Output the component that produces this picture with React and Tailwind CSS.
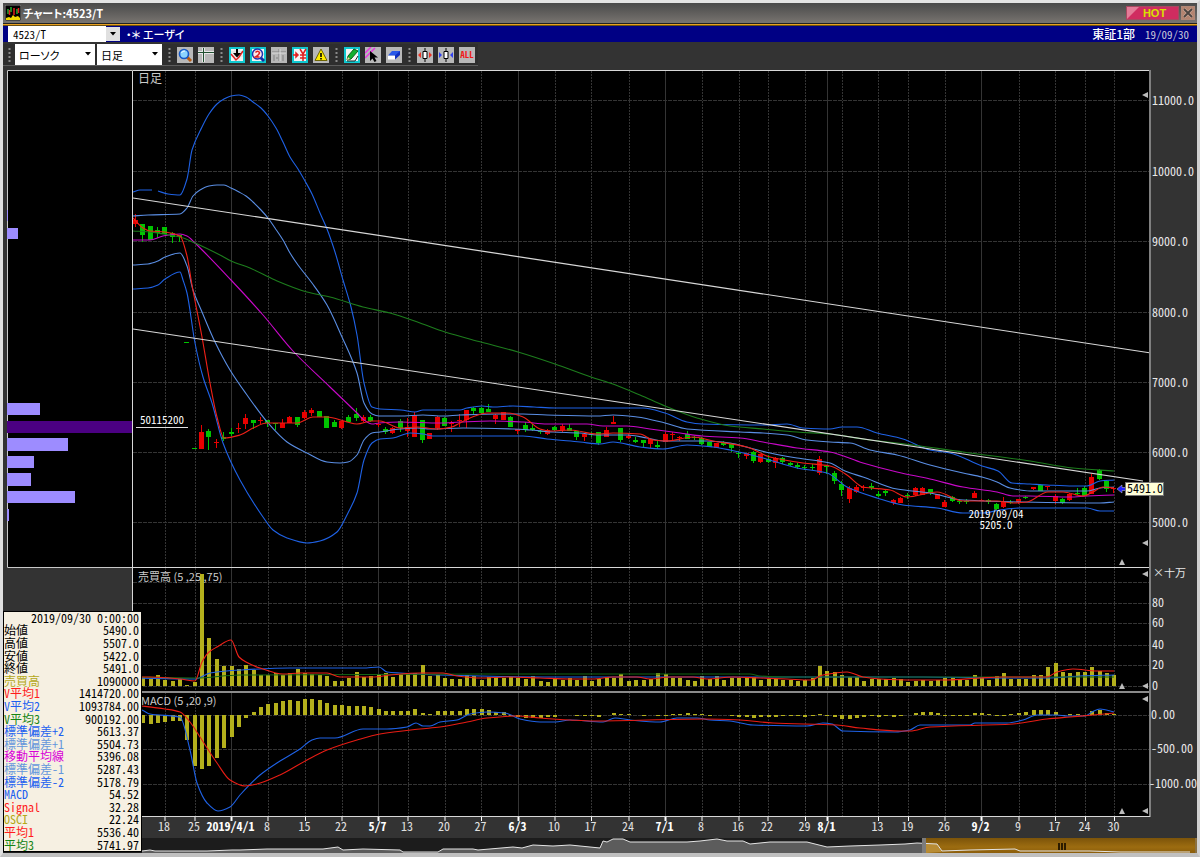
// src/App.jsx
import React, { useId } from "react";

// x of 2019/4/1 and the width of one trading day
const X0 = 231.5;
const STEP = 7.358;
const dayX = (i) => X0 + STEP * i;

const FIRST_DAY = -13;

// [color, body top, body bottom, high, low]
const CANDLES = [
  ["r", 220, 224, 214, 227], ["g", 224, 235, 224, 242], ["g", 226, 240, 226, 240], ["g", 230, 233, 227, 238],
  ["g", 227, 234, 227, 234], ["g", 233, 237, 232, 243], ["g", 235, 237, 235, 242], ["g", 342, 343, 342, 343],
  ["g", 448, 449, 448, 449], ["r", 432, 449, 425, 449], ["g", 431, 437, 429, 450], ["r", 442, 443, 439, 448],
  ["g", 437, 439, 432, 441], ["g", 432, 434, 428, 436], ["r", 428, 429, 423, 433], ["r", 418, 424, 414, 429],
  ["g", 420, 423, 420, 429], ["r", 420, 421, 417, 424], ["g", 420, 423, 420, 427], ["g", 423, 424, 423, 430],
  ["r", 423, 428, 419, 428], ["r", 417, 423, 416, 423], ["g", 417, 425, 417, 427], ["r", 412, 418, 410, 419],
  ["r", 410, 413, 408, 416], ["g", 411, 417, 411, 417], ["g", 416, 428, 416, 428], ["g", 422, 427, 420, 427],
  ["r", 421, 428, 421, 429], ["g", 417, 422, 415, 422], ["g", 414, 418, 408, 421], ["r", 417, 421, 415, 422],
  ["g", 417, 421, 415, 422], ["r", 424, 425, 420, 427], ["g", 429, 432, 427, 434], ["r", 428, 433, 427, 434],
  ["g", 421, 428, 419, 432], ["r", 427, 431, 418, 437], ["r", 415, 437, 412, 437], ["g", 420, 440, 420, 443],
  ["r", 433, 439, 433, 439], ["r", 417, 428, 416, 430], ["g", 418, 426, 417, 426], ["r", 423, 424, 421, 432],
  ["r", 420, 421, 414, 427], ["r", 410, 420, 410, 428], ["g", 408, 411, 407, 415], ["g", 408, 413, 407, 414],
  ["g", 409, 412, 404, 412], ["r", 415, 419, 414, 424], ["r", 412, 420, 412, 420], ["g", 417, 427, 416, 427],
  ["r", 429, 431, 429, 434], ["g", 425, 430, 422, 432], ["g", 428, 430, 424, 431], ["g", 431, 432, 430, 434],
  ["r", 430, 434, 429, 435], ["g", 427, 430, 426, 431], ["r", 426, 430, 424, 432], ["g", 428, 431, 424, 431],
  ["g", 431, 437, 431, 440], ["r", 434, 437, 433, 441], ["g", 434, 435, 432, 437], ["g", 432, 443, 432, 445],
  ["r", 430, 437, 427, 437], ["r", 422, 424, 416, 424], ["g", 428, 440, 428, 442], ["r", 436, 438, 434, 439],
  ["g", 440, 442, 437, 443], ["g", 440, 443, 440, 447], ["r", 439, 444, 439, 448], ["g", 445, 447, 441, 449],
  ["r", 434, 442, 432, 442], ["r", 434, 435, 432, 440], ["r", 437, 438, 436, 441], ["g", 434, 439, 431, 439],
  ["g", 437, 438, 436, 440], ["g", 438, 444, 437, 445], ["g", 442, 447, 442, 447], ["r", 443, 448, 443, 448],
  ["g", 442, 445, 441, 446], ["g", 444, 448, 443, 452], ["g", 453, 454, 451, 458], ["r", 453, 456, 453, 459],
  ["g", 452, 461, 451, 463], ["r", 454, 462, 454, 463], ["g", 459, 462, 455, 463], ["r", 458, 463, 457, 468],
  ["g", 458, 462, 457, 464], ["g", 463, 465, 462, 466], ["g", 465, 467, 463, 469], ["g", 467, 468, 465, 470],
  ["g", 467, 468, 464, 470], ["r", 459, 473, 456, 475], ["g", 466, 467, 466, 474], ["g", 473, 481, 471, 484],
  ["g", 484, 490, 481, 496], ["r", 488, 499, 486, 503], ["r", 487, 492, 485, 493], ["r", 487, 488, 485, 491],
  ["g", 486, 488, 483, 490], ["g", 494, 496, 491, 497], ["g", 491, 493, 489, 496], ["r", 500, 503, 499, 505],
  ["r", 498, 503, 497, 503], ["g", 495, 496, 493, 499], ["r", 488, 495, 487, 496], ["r", 488, 495, 487, 495],
  ["g", 489, 493, 489, 495], ["r", 494, 499, 494, 499], ["r", 502, 507, 500, 507], ["g", 497, 501, 496, 502],
  ["g", 501, 502, 499, 504], ["g", 501, 502, 499, 504], ["r", 493, 498, 491, 498], ["r", 500, 501, 499, 501],
  ["g", 500, 502, 499, 504], ["g", 504, 509, 503, 510], ["r", 502, 507, 497, 508], ["g", 502, 503, 500, 504],
  ["r", 499, 502, 499, 504], ["g", 497, 498, 496, 499], ["r", 487, 489, 487, 490], ["g", 485, 491, 484, 491],
  ["r", 486, 487, 486, 490], ["r", 496, 501, 494, 504], ["g", 499, 503, 498, 504], ["r", 494, 500, 493, 501],
  ["g", 493, 494, 488, 495], ["g", 488, 496, 486, 496], ["r", 477, 494, 474, 494], ["g", 470, 479, 469, 480],
  ["g", 481, 489, 480, 492], ["r", 488, 489, 487, 493],
];

// bar heights, one per day, starting the day after FIRST_DAY
const VOLUME = [
  9, 7, 11, 6, 5, 7, 1, 4, 112, 48, 27, 20, 20, 17, 21, 16, 11, 11, 13, 11, 13, 17, 13, 12, 11, 10, 5, 5, 8, 14, 9, 10,
  12, 13, 9, 12, 12, 13, 21, 10, 11, 8, 7, 7, 11, 10, 6, 9, 9, 8, 9, 8, 7, 10, 5, 4, 8, 6, 8, 6, 10, 5, 7, 9, 8, 12, 5,
  6, 6, 7, 13, 12, 8, 8, 6, 5, 10, 7, 10, 6, 8, 8, 8, 9, 6, 7, 7, 6, 6, 5, 6, 8, 20, 15, 14, 11, 9, 9, 5, 7, 7, 7, 8, 7,
  4, 5, 6, 5, 6, 8, 8, 7, 6, 11, 8, 6, 10, 13, 7, 7, 7, 11, 11, 19, 23, 14, 13, 14, 14, 19, 15, 13, 11,
];

const OSCI = [
  -8, -9, -8, -7, -6, -6, -25, -51, -54, -51, -43, -33, -22, -12, -3, 3, 8, 11, 12, 14, 15, 14, 16, 16, 15, 12, 10, 10,
  9, 9, 9, 8, 6, 4, 4, 4, 4, 6, 2, 1, 4, 4, 4, 4, 6, 6, 6, 5, 3, 3, -1, -2, -3, -3, -3, -2, -2, 0, 0, -1, -1, -1, -2, 0,
  2, 1, 1, 0, -1, 0, -1, -1, 1, 1, 2, 1, 1, -1, 0, 0, -1, -2, -2, -3, -2, -2, -2, -1, -1, -1, -2, -1, 1, -1, -2, -4, -4,
  -3, -2, -1, -2, -1, -2, -1, 0, 2, 3, 3, 2, -1, -1, -1, -1, 2, 2, 1, -1, -1, 1, 2, 3, 5, 5, 5, 3, -1, 1, 1, -1, 4, 5, 2,
  1,
];

const PRICE_LINES = [
  { color: "#1f62e6", points: "133,192 140,190 152,190" },
  {
    color: "#1f62e6",
    points:
      "158,191 168,194 180,195 187,179 192,150 202,127 209,114 217,104 224,99 231,96 239,95 246,97 253,102 261,108 268,116 276,128 283,142 290,157 298,169 305,181 312,194 320,213 327,229 335,252 343,280 351,307 357,335 364,383 372,407 380,409 401,410 415,412 423,410 460,410 467,408 482,406 493,407 513,406 534,407 555,408 643,408 665,413 687,422 702,424 763,425 787,424 803,428 830,429 842,427 857,427 877,433 903,439 930,450 950,453 982,466 998,471 1012,483 1030,484 1047,485 1073,486 1087,486 1100,481 1114,480",
  },
  {
    color: "#5a8ee4",
    points:
      "133,216 148,215 180,214 187,208 193,196 200,190 209,186 217,185 224,185 231,188 239,192 246,196 253,202 261,210 268,218 275,228 283,240 290,253 298,265 312,283 327,305 342,337 357,373 364,403 372,414 379,416 400,416 423,415 443,416 460,415 500,414 523,414 547,415 597,416 613,415 637,417 665,423 687,429 740,432 763,433 787,435 807,440 830,442 850,443 870,450 897,455 930,465 963,473 982,477 997,482 1010,488 1030,491 1087,491 1100,488 1114,487",
  },
  {
    color: "#c808c8",
    points:
      "133,240 150,240 163,236 180,234 187,236 195,243 231,280 263,315 293,351 330,387 357,413 364,420 372,424 379,423 400,422 440,423 460,422 490,421 523,422 547,424 587,424 603,426 627,426 650,429 680,433 702,436 740,438 763,442 797,448 830,452 863,463 897,472 930,479 963,487 997,492 1013,496 1030,496 1070,497 1087,496 1114,495",
  },
  {
    color: "#5a8ee4",
    points:
      "133,265 148,264 158,261 165,257 180,253 187,266 193,290 202,312 215,342 230,370 247,395 268,423 287,442 307,453 327,462 340,463 348,462 357,455 364,440 372,433 380,432 400,429 417,428 430,429 463,428 513,429 530,430 553,432 580,433 597,435 627,435 647,438 663,441 707,441 730,443 750,448 770,453 797,458 830,463 845,471 863,477 897,489 930,493 963,500 1020,502 1100,503 1114,502",
  },
  {
    color: "#1f62e6",
    points:
      "133,289 148,288 158,285 165,279 180,272 183,280 187,293 195,343 203,377 212,403 223,443 240,480 263,517 273,530 287,538 307,543 320,541 337,532 348,513 357,493 364,460 372,443 380,439 393,438 410,433 423,434 433,436 523,436 547,439 580,442 600,444 613,442 640,447 663,449 687,445 713,447 730,450 763,458 797,468 827,473 847,487 877,498 903,505 937,508 963,513 983,513 1000,510 1020,508 1087,508 1100,511 1114,511",
  },
  {
    color: "#1d7d1d",
    points:
      "133,231 150,232 163,234 180,237 195,243 220,255 231,261 250,268 275,280 307,292 330,297 363,307 390,313 420,323 445,332 481,342 518,352 555,364 591,377 610,383 640,395 665,406 697,418 730,426 763,429 797,432 830,434 863,439 913,445 963,452 1030,461 1073,468 1114,471",
  },
  {
    color: "#f02018",
    points:
      "133,218 143,228 150,231 165,232 180,236 187,256 192,285 202,337 210,383 217,417 224,438 240,435 253,428 267,423 297,423 313,417 327,417 347,422 357,424 372,421 380,421 400,428 417,427 437,429 452,427 460,423 475,416 487,413 507,413 523,417 540,429 550,431 570,430 597,434 613,433 640,434 653,440 667,441 693,437 713,441 747,447 770,457 803,463 830,466 847,475 863,487 890,490 907,497 937,492 963,501 997,501 1013,503 1027,502 1048,492 1063,492 1083,496 1093,492 1103,487 1114,488",
  },
  // trend lines
  { color: "#d8d8d8", points: "133,198 1151,353" },
  { color: "#d8d8d8", points: "133,329 1143,481" },
];

const VOLUME_LINES = [
  {
    color: "#1f62e6",
    points:
      "133,678 195,679 210,673 240,670 290,668 363,668 379,667 387,672 400,673 440,675 480,676 570,677 700,677 850,677 923,677 1013,678 1047,678 1080,676 1114,675",
  },
  { color: "#146414", points: "133,677 195,678 240,675 480,674 750,674 760,676 793,677 900,677 1114,677" },
  {
    color: "#f02018",
    points:
      "133,677 150,677 180,679 195,681 202,662 209,652 217,647 231,640 239,657 246,662 260,668 283,674 300,673 327,673 340,677 373,677 390,675 420,673 443,673 457,676 480,678 507,677 540,678 570,679 593,679 613,677 637,677 650,679 670,677 693,677 707,679 733,677 760,678 787,679 810,680 823,675 847,672 863,677 880,679 913,680 947,680 980,678 1003,677 1047,677 1057,672 1073,669 1097,671 1114,671",
  },
];

const MACD_LINES = [
  {
    color: "#1f62e6",
    points:
      "133,708 142,710 150,714 180,717 190,750 197,783 207,803 218,811 230,807 240,795 260,775 280,761 300,749 312,740 320,738 335,738 363,729 387,729 407,727 416,723 423,726 430,726 440,722 457,720 470,714 487,712 505,713 520,719 540,722 555,722 570,720 603,722 615,718 630,720 660,722 677,718 697,718 710,720 730,721 753,725 807,726 823,723 832,724 843,731 895,732 910,730 920,725 970,725 975,723 1007,723 1023,720 1037,715 1057,715 1067,716 1085,716 1092,712 1100,709 1114,712",
  },
  {
    color: "#e81c14",
    points:
      "133,705 142,706 165,709 180,712 190,722 200,737 217,763 230,780 245,786 257,784 280,775 307,760 327,750 357,740 380,734 420,729 440,727 467,722 487,718 517,716 540,718 570,720 593,721 703,719 740,720 773,723 837,725 860,728 900,731 910,731 930,727 1013,724 1047,719 1070,717 1093,715 1114,713",
  },
];

const DATES = [
  [165, "18"], [195, "25"], [231.5, "2019/4/1", true], [268, "8"], [305.5, "15"], [342, "22"], [378.5, "5/7", true],
  [408, "13"], [445, "20"], [481.5, "27"], [518.5, "6/3", true], [555, "10"], [591.5, "17"], [629, "24"],
  [665.5, "7/1", true], [702, "8"], [739, "16"], [768, "22"], [805.5, "29"], [827.5, "8/1", true], [842.5, ""],
  [878.5, "13"], [908.5, "19"], [945, "26"], [981.5, "9/2", true], [1019, "9"], [1055.5, "17"], [1085.5, "24"],
  [1114.5, "30"],
];

const PROFILE = [
  [210, 11, 1], [228, 11, 11], [403, 12, 33], [438, 13, 61], [456, 12, 27], [473, 13, 24], [491, 12, 68], [509, 12, 2],
];

const LEGEND = [
  ["始値", "5490.0", "text-black"],
  ["高値", "5507.0", "text-black"],
  ["安値", "5422.0", "text-black"],
  ["終値", "5491.0", "text-black"],
  ["売買高", "1090000", "text-[#b4a818]"],
  ["V平均1", "1414720.00", "text-[#ff1c1c]"],
  ["V平均2", "1093784.00", "text-[#1c60f0]"],
  ["V平均3", "900192.00", "text-[#148414]"],
  ["標準偏差+2", "5613.37", "text-[#1c60f0]"],
  ["標準偏差+1", "5504.73", "text-[#6496dc]"],
  ["移動平均線", "5396.08", "text-[#d800d8]"],
  ["標準偏差-1", "5287.43", "text-[#6496dc]"],
  ["標準偏差-2", "5178.79", "text-[#1c60f0]"],
  ["MACD", "54.52", "text-[#1c60f0]"],
  ["Signal", "32.28", "text-[#ff1c1c]"],
  ["OSCI", "22.24", "text-[#b4a818]"],
  ["平均1", "5536.40", "text-[#ff1c1c]"],
  ["平均3", "5741.97", "text-[#148414]"],
];

// monotone cubic through the points, so the bands bend without overshooting
function smoothPath(points) {
  const p = points.split(" ").map((s) => s.split(",").map(Number));
  const n = p.length;
  const slope = p.slice(1).map((q, i) => (q[1] - p[i][1]) / (q[0] - p[i][0]));
  const m = p.map((_, i) => {
    if (i === 0) return slope[0];
    if (i === n - 1) return slope[n - 2];
    const a = slope[i - 1];
    const b = slope[i];
    return a * b <= 0 ? 0 : (2 * a * b) / (a + b);
  });
  let d = `M${p[0][0]} ${p[0][1]}`;
  for (let i = 0; i < n - 1; i++) {
    const h = (p[i + 1][0] - p[i][0]) / 3;
    d += `C${p[i][0] + h} ${p[i][1] + h * m[i]} ${p[i + 1][0] - h} ${p[i + 1][1] - h * m[i + 1]} ${p[i + 1][0]} ${p[i + 1][1]}`;
  }
  return d;
}

/* ── chart pieces ── */

function Grid({ top, bottom, rows }) {
  return (
    <g stroke="#343434" fill="none" shapeRendering="crispEdges">
      {rows.map((y) => (
        <line key={y} x1={133} x2={1150} y1={y} y2={y} strokeDasharray="4 1" />
      ))}
      {DATES.map(([x, , month]) => (
        <line key={x} x1={x} x2={x} y1={top} y2={bottom} strokeDasharray={month ? undefined : "2 1"} />
      ))}
    </g>
  );
}

function Lines({ data }) {
  return data.map((l) => (
    <path key={l.points} d={smoothPath(l.points)} fill="none" stroke={l.color} strokeWidth={1.100} />
  ));
}

function LeftMark({ y }) {
  return <polygon points={`1142,${y} 1148,${y - 3} 1148,${y + 3}`} fill="#bbb" />;
}

function UpMark({ y }) {
  return <polygon points={`1122,${y - 3} 1125,${y + 3} 1119,${y + 3}`} fill="#bbb" />;
}

function Bars({ values, base, width }) {
  return (
    <g fill="#b4b01c">
      {values.map((v, i) => (
        <rect
          key={i}
          x={Math.round(dayX(FIRST_DAY + 1 + i) - width / 2)}
          y={v > 0 ? base - v : base}
          width={width}
          height={Math.abs(v)}
        />
      ))}
    </g>
  );
}

function PriceChart() {
  const rows = [100.5, 171.5, 241.5, 312.5, 382.5, 452.5, 522.5];
  return (
    <svg viewBox="132 70 1065 498" className="block h-auto w-full" role="img" aria-label="日足">
      <rect x={132} y={70} width={1019} height={498} fill="#000" />
      <Grid top={71} bottom={568} rows={rows} />
      {CANDLES.map(([c, top, bottom, high, low], i) => {
        const x = Math.round(dayX(FIRST_DAY + i));
        return (
          <g key={i} fill={c === "r" ? "#e80000" : "#00c400"}>
            <rect x={x - 1} y={high} width={1} height={low - high} />
            <rect x={x - 3} y={top} width={5} height={Math.max(bottom - top, 1)} />
          </g>
        );
      })}
      <Lines data={PRICE_LINES} />
      <path d="M132.5 568V70.5H1150M132 567.5H1150" fill="none" stroke="#d8d8d8" />
      <rect x={1149} y={70} width={2} height={498} fill="#808080" />

      <g fill="#fff" fontSize={12}>
        <text x={138} y={83} fill="#ccc">日足</text>
        {rows.map((y, i) => (
          <text key={y} x={1152} y={y + 4} fill="#e8e8e8">
            {(11000 - i * 1000).toFixed(1)}
          </text>
        ))}
        <text x={140} y={424} fontSize={11}>50115200</text>
        <text x={996} y={518} fontSize={11} textAnchor="middle">2019/09/04</text>
        <text x={996} y={529} fontSize={11} textAnchor="middle">5205.0</text>
      </g>
      <line x1={136} x2={188} y1={427.5} y2={427.5} stroke="#e0e0e0" />

      <path d="M1117 489l5-4v2.500h4v3h-4v2.500z" fill="#2020ff" stroke="#ccc" strokeWidth={0.5} />
      <rect x={1125.5} y={482.5} width={38} height={13} fill="#ffffd8" stroke="#777" />
      <text x={1127} y={493} fontSize={12} fill="#000">5491.0</text>
      <LeftMark y={95} />
      <LeftMark y={543} />
      <UpMark y={562} />
    </svg>
  );
}

function VolumeChart() {
  const rows = [582.5, 603.5, 623.5, 645.5, 665.5, 686.5];
  return (
    <svg viewBox="132 568 1065 122" className="block h-auto w-full" role="img" aria-label="売買高">
      <rect x={132} y={568} width={1019} height={122} fill="#000" />
      <Grid top={568} bottom={690} rows={rows} />
      <Bars values={VOLUME} base={686} width={4} />
      <Lines data={VOLUME_LINES} />
      <line x1={132.5} x2={132.5} y1={568} y2={690} stroke="#d8d8d8" />
      <rect x={1149} y={568} width={2} height={122} fill="#808080" />
      <g fill="#e8e8e8" fontSize={12}>
        <text x={138} y={581} fontSize={11} fill="#ccc" className="font-['Noto_Sans_CJK_JP',sans-serif]">
          売買高 (5 ,25 ,75)
        </text>
        <text x={1153} y={577} fontSize={11} className="font-['Noto_Sans_CJK_JP',sans-serif] [font-feature-settings:'palt']">
          ×十万
        </text>
        {rows.slice(1).map((y, i) => (
          <text key={y} x={1152} y={y + 3}>
            {80 - i * 20}
          </text>
        ))}
      </g>
      <LeftMark y={574} />
      <LeftMark y={686} />
      <UpMark y={686} />
    </svg>
  );
}

function MacdChart() {
  const rows = [715.5, 749.5, 784.5];
  return (
    <svg viewBox="132 690 1065 148" className="block h-auto w-full" role="img" aria-label="MACD">
      <rect x={132} y={690} width={1019} height={126} fill="#000" />
      <Grid top={692} bottom={816} rows={rows} />
      <Bars values={OSCI} base={715} width={4} />
      <Lines data={MACD_LINES} />
      <rect x={132} y={691} width={1018} height={2} fill="#8a8a8a" />
      <rect x={1149} y={690} width={2} height={127} fill="#808080" />
      <line x1={132} x2={1150} y1={816.5} y2={816.5} stroke="#d8d8d8" />
      <g fill="#e8e8e8" fontSize={12}>
        <text x={141} y={705} fontSize={11} fill="#ccc" className="font-['Noto_Sans_CJK_JP',sans-serif]">
          MACD (5 ,20 ,9)
        </text>
        <text x={1151} y={719}>0.00</text>
        <text x={1151} y={753}>-500.00</text>
        <text x={1149} y={788}>-1000.00</text>
      </g>
      {DATES.map(([x, label, month]) =>
        label ? (
          <g key={x}>
            <line x1={x} x2={x} y1={817} y2={821} stroke="#fff" strokeWidth={month ? 2 : 1} />
            <text
              x={x - 1}
              y={831}
              textAnchor="middle"
              fontSize={12}
              fontWeight={month ? 700 : 400}
              fill={month ? "#fff" : "#e0e0e0"}
            >
              {label}
            </text>
          </g>
        ) : null
      )}
      <LeftMark y={699} />
      <LeftMark y={811} />
      <UpMark y={811} />
    </svg>
  );
}

function VolumeProfile() {
  return (
    <svg viewBox="7 70 125 498" preserveAspectRatio="none" className="block h-full w-full" aria-hidden="true">
      <rect x={7} y={70} width={125} height={498} fill="#000" />
      <path d="M132 70.500H7.500V567.500H132" fill="none" stroke="#c8c8c8" />
      <g fill="#9d8cff">
        {PROFILE.map(([y, h, w]) => (
          <rect key={y} x={7} y={y} width={w} height={h} />
        ))}
      </g>
      <rect x={7} y={421} width={125} height={12} fill="#4b0082" />
    </svg>
  );
}

function Navigator() {
  const line =
    "142,851 150,850 155,851 207,851 232,850 240,850 267,849 323,849 338,847 343,850 363,849 400,850 403,852 438,852 443,849 473,849 478,850 513,847 522,848 533,845 553,846 570,845 600,848 603,841 607,842 613,839 623,839 630,842 687,842 700,841 717,839 727,841 743,841 750,844 770,842 807,842 827,847 850,846 880,845 905,844 917,843 937,844 942,851 970,850 1015,849 1020,851 1090,851 1120,852 1190,852";
  return (
    <svg viewBox="3 838 1194 15" className="block h-auto w-full bg-[#1c1c1c]" aria-hidden="true">
      <defs>
        <linearGradient id="gold" x1="0" y1="0" x2="0" y2="1">
          <stop offset="0" stopColor="#7c540a" />
          <stop offset="0.6" stopColor="#9c6c10" />
          <stop offset="1" stopColor="#8c5e0c" />
        </linearGradient>
      </defs>
      <polygon points={`142,853 ${line} 1190,853`} fill="#5c5c5c" />
      <rect x={925} y={838} width={272} height={15} fill="url(#gold)" />
      <polygon points="926,853 926,844 937,844 942,852" fill="#b88c34" />
      <polyline points={line} fill="none" stroke="#e4e4e4" />
      <rect x={922} y={838} width={4} height={15} fill="#7c7c7c" />
      <rect x={1195} y={838} width={2} height={15} fill="#8a7040" />
      <path d="M1059 843v7M1062 843v7M1065 843v7" stroke="#2c1c00" strokeWidth={2} />
    </svg>
  );
}

/* ── toolbar ── */

function Grip({ className = "mx-1.5 h-4 w-[3px] shrink-0" }) {
  return (
    <svg className={className} viewBox="0 0 3 16" aria-hidden="true">
      <path d="M1.500 1v14" stroke="#8a8a8a" strokeWidth={2} strokeDasharray="2 2" />
    </svg>
  );
}

function ToolButton({ label, active, children }) {
  return (
    <button
      type="button"
      aria-label={label}
      className={active ? "size-4 shrink-0 bg-[#10c8d0]" : "size-4 shrink-0 bg-[#b8b8b8]"}
    >
      <svg viewBox="0 0 16 16" className="block size-4" fill="none">
        {active && <rect x={2} y={2} width={12} height={12} fill="#f4f4f4" />}
        {children}
      </svg>
    </button>
  );
}

function DropSelect({ label, value, className }) {
  const id = useId();
  return (
    <div className={className}>
      <label htmlFor={id} className="sr-only">{label}</label>
      <select
        id={id}
        defaultValue={value}
        className="block h-[21px] w-full appearance-none bg-white pl-1 font-['Noto_Sans_CJK_JP',sans-serif] text-[11px] leading-5 text-black [font-feature-settings:'palt']"
      >
        <option>{value}</option>
      </select>
      <svg className="pointer-events-none absolute top-2 right-1 h-1 w-1.5" viewBox="0 0 6 4" aria-hidden="true">
        <path d="M0 0h6L3 3.500z" fill="#000" />
      </svg>
    </div>
  );
}

function Toolbar() {
  return (
    <div className="flex h-[22px] w-[475px] max-w-full items-center border-b border-[#5c5c5c] bg-[#2e2e2e]">
      <Grip className="mr-1 ml-[5px] h-4 w-[3px] shrink-0" />
      <DropSelect label="チャート種類" value="ローソク" className="relative w-20 shrink-0" />
      <DropSelect label="足種" value="日足" className="relative ml-0.5 w-[65px] shrink-0" />
      <Grip />
      <div className="flex gap-[5px]">
        <ToolButton label="拡大">
          <path d="M10 10l4 4" stroke="#b45a14" strokeWidth={3} />
          <circle cx={7} cy={7} r={4.500} fill="#8cd4ff" stroke="#1458c8" strokeWidth={1.600} />
          <path d="M4.500 6q1-2.500 3.500-2" stroke="#fff" />
        </ToolButton>
        <ToolButton label="クロスライン">
          <path d="M0 5.500h16M5.500 1v14" stroke="#e8e8e8" strokeWidth={3} />
          <path d="M0 5.500h16M5.500 1v14" stroke="#205030" />
        </ToolButton>
      </div>
      <Grip />
      <div className="flex gap-[5px]">
        <ToolButton label="下落" active>
          <path d="M2 5h12M2 9h12M6 2v12M10 2v12" stroke="#ddd" />
          <path d="M2 7l5 6 3-3 4-6" stroke="#e02020" strokeWidth={1.500} />
          <path d="M7 2h2v4h3l-4 4.500L4 6h3z" fill="#000" />
        </ToolButton>
        <ToolButton label="二重表示" active>
          <path d="M10 10l4 4" stroke="#1430a0" strokeWidth={3} />
          <circle cx={7.500} cy={7} r={5} fill="#ffe8e8" stroke="#2030b0" strokeWidth={1.500} />
          <path d="M5.500 5.500q2-2.500 4 0q0 2-4 4.500h4" stroke="#e02020" strokeWidth={1.500} />
        </ToolButton>
        <ToolButton label="グリッド">
          <path d="M1 5h14M8 2v12M3 8v6M12 8v6M5 11h2" stroke="#808080" />
          <path d="M1 6h14M9 2v12" stroke="#ddd" />
        </ToolButton>
        <ToolButton label="円表示" active>
          <path d="M1 8h3M4 6v4l2-2z" fill="#e02020" stroke="#e02020" strokeWidth={1.500} />
          <path d="M8 2l3 5 3-5M11 7v7M8 8h6M8 11h6" stroke="#e02020" strokeWidth={1.500} />
        </ToolButton>
        <ToolButton label="アラート">
          <path d="M8 2l6 11.500H2z" fill="#ffec00" stroke="#6c6400" />
          <path d="M8 6v4M8 11v1.500" stroke="#000" strokeWidth={1.600} />
        </ToolButton>
      </div>
      <Grip />
      <div className="flex gap-[5px]">
        <ToolButton label="線を引く" active>
          <path d="M3 14h8l3-5" stroke="#222" />
          <path d="M10 2l4 2-7 8-4 1 1-4z" fill="#10b030" stroke="#086018" />
          <path d="M3 13l1-3 2 2z" fill="#ffd8a0" />
        </ToolButton>
        <ToolButton label="選択">
          <path d="M0 6l6-6M0 11L10 1" stroke="#e838e0" strokeWidth={1.500} />
          <path d="M5 4v10l2.500-2.500L9.500 15l2-1-2-3.500H13z" fill="#000" />
        </ToolButton>
        <ToolButton label="消しゴム">
          <path d="M6 4h8v4l-5 4.500V8.500z" fill="#1030c0" />
          <path d="M2 8.500h7v4H2z" fill="#fff" />
          <path d="M6 4h8L9 8.500H2z" fill="#2858e8" />
        </ToolButton>
      </div>
      <Grip />
      <div className="flex gap-[5px]">
        <ToolButton label="間隔を広げる">
          <path d="M8 1v14" stroke="#000" />
          <path d="M6 4.500h4v7H6z" fill="#fff" stroke="#000" />
          <path d="M4 5v6L1 8zM12 5v6l3-3z" fill="#f03020" />
        </ToolButton>
        <ToolButton label="間隔を狭める">
          <path d="M8 1v14" stroke="#000" />
          <path d="M6 4.500h4v7H6z" fill="#fff" stroke="#000" />
          <path d="M1 5v6l3-3zM15 5v6l-3-3z" fill="#3040f0" />
        </ToolButton>
        <button
          type="button"
          className="h-4 w-4 shrink-0 bg-[#b8b8b8] text-center font-['Liberation_Sans_Narrow','Noto_Sans_Mono_CJK_JP',sans-serif] text-[9px] leading-4 font-bold text-[#f01818]"
        >
          ALL
        </button>
      </div>
    </div>
  );
}

function Legend() {
  return (
    <table className="absolute bottom-px left-0 h-[241px] w-[139px] border-collapse border border-black bg-[#f6f0e2] text-xs leading-3">
      <thead>
        <tr>
          <th colSpan={2} className="p-0 pr-0.5 text-right font-normal whitespace-nowrap text-black">
            2019/09/30 0:00:00
          </th>
        </tr>
      </thead>
      <tbody>
        {LEGEND.map(([name, value, color]) => (
          <tr key={name}>
            <th scope="row" className={`p-0 text-left font-normal whitespace-nowrap ${color}`}>
              {name}
            </th>
            <td className="p-0 pr-0.5 text-right text-black">{value}</td>
          </tr>
        ))}
      </tbody>
    </table>
  );
}

export default function App() {
  return (
    <div className="min-h-screen overflow-hidden border-t-[3px] border-r-[3px] border-b-4 border-l-[3px] border-t-[#e4e4e4] border-r-[#d0d0d0] border-b-[#c0c0c0] border-l-[#e0e0e0] bg-[#333] font-['Noto_Sans_Mono_CJK_JP','Noto_Sans_CJK_JP',monospace] text-white">
      {/* title bar */}
      <header className="flex h-5 items-center bg-linear-to-b from-[#4a4a4a] to-[#787470] px-0.5">
        <svg viewBox="0 0 16 16" className="size-4 shrink-0" aria-hidden="true">
          <rect width={16} height={16} fill="#000" stroke="#888" />
          <path d="M3 4v5M6 2v5M12 4v5" stroke="#20b030" strokeWidth={1.500} />
          <path d="M4.500 5v5M9 3v7M13.500 3v5" stroke="#e02020" strokeWidth={1.500} />
          <path d="M1 15v-2l3-1 2 1 2-3 2 2 3-1 2 2v2z" fill="#f0d800" />
        </svg>
        <h1 className="ml-0.5 font-['Noto_Sans_CJK_JP',sans-serif] text-[11px] leading-5 font-bold [font-feature-settings:'palt']">
          チャート:4523/T
        </h1>
        <button
          type="button"
          className="relative ml-auto h-3.5 w-[53px] overflow-hidden border border-[#a84860] bg-[#d02c60] pl-1 text-center font-['Liberation_Sans',sans-serif] text-[11px] leading-3 font-bold text-[#d8e000]"
        >
          <svg viewBox="0 0 12 12" className="absolute top-0 left-0 size-3" aria-hidden="true">
            <path d="M0 0h12L0 12z" fill="#e47c98" />
          </svg>
          HOT
        </button>
        <button type="button" aria-label="閉じる" className="ml-0.5 size-3.5 border border-[#b08878] bg-[#b48470]">
          <svg viewBox="0 0 12 12" className="block size-3">
            <path d="M2 2l8 8M10 2l-8 8" stroke="#d8b8a8" strokeWidth={3} />
            <path d="M2 2l8 8M10 2l-8 8" stroke="#4c4440" strokeWidth={2} />
          </svg>
        </button>
      </header>
      <div className="h-[3px] border-t border-b border-t-[#222] border-b-[#6c5010] bg-[#e8a020]" />

      {/* symbol bar */}
      <div className="flex h-4 items-center bg-[#000084] pr-2 pl-[5px] text-[11px]">
        <label htmlFor="symbol" className="sr-only">銘柄コード</label>
        <input id="symbol" defaultValue="4523/T" className="h-4 w-[98px] bg-white pl-[5px] leading-4 text-black outline-none" />
        <button type="button" aria-label="銘柄一覧" className="flex h-3.5 w-3.5 items-center justify-center bg-[#e0e0e0]">
          <svg viewBox="0 0 6 4" className="h-1 w-1.5">
            <path d="M0 0h6L3 3.500z" fill="#000" />
          </svg>
        </button>
        <span className="ml-1.5 font-['Noto_Sans_CJK_JP',sans-serif] leading-4 font-medium [font-feature-settings:'palt']">
          ・＊ エーザイ
        </span>
        <span className="ml-auto font-['Noto_Sans_CJK_JP',sans-serif] text-xs leading-4 font-medium [font-feature-settings:'palt']">
          東証1部
        </span>
        <span className="ml-2.5 leading-4 text-[#c8c8d8]">19/09/30</span>
      </div>

      <div className="pt-0.5 pb-1">
        <Toolbar />
      </div>

      {/* price */}
      <div className="flex">
        <div className="w-[129px] shrink-0 pl-1">
          <VolumeProfile />
        </div>
        <div className="min-w-0 flex-1">
          <PriceChart />
        </div>
      </div>

      {/* volume, MACD, range slider */}
      <div className="relative">
        <div className="pl-[129px]">
          <VolumeChart />
          <MacdChart />
        </div>
        <Navigator />
        <Legend />
      </div>
    </div>
  );
}
